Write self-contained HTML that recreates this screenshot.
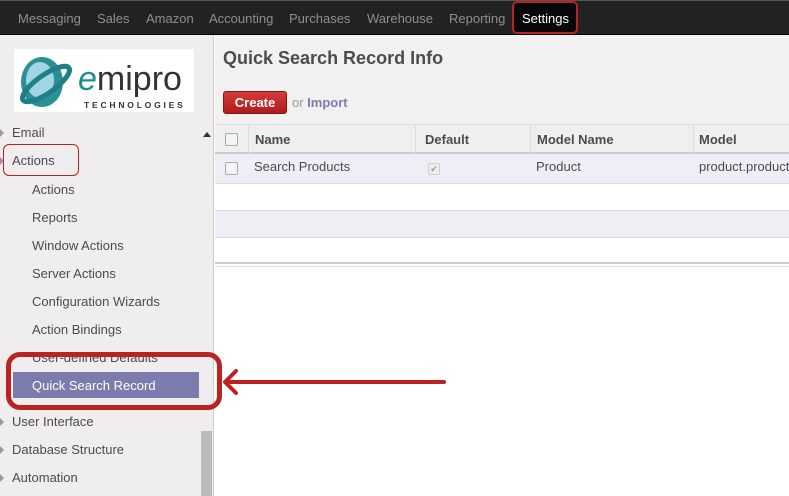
<!DOCTYPE html>
<html><head><meta charset="utf-8"><style>
*{margin:0;padding:0;box-sizing:border-box}
body{width:789px;height:496px;overflow:hidden;font-family:"Liberation Sans",Arial,sans-serif;background:#fff;position:relative;font-size:13px;color:#4c4c4c}
.top{position:absolute;left:0;top:0;width:789px;height:35px;background:#222;border-top:1px solid #555;border-bottom:1px solid #000}
.top span{position:absolute;top:10px;color:#8f8f8f;font-size:13px}
.set{position:absolute;left:512px;top:1px;width:66px;height:33px;background:#080808;border:2px solid #b22;border-radius:5px}
.side{position:absolute;left:0;top:35px;width:214px;height:461px;background:#efedee;border-right:1px solid #ccc}
.side .it{position:absolute;font-size:13px;color:#4c4c4c}
.tri{position:absolute;left:0;width:0;height:0;border-top:4px solid transparent;border-bottom:4px solid transparent;border-left:4px solid #999}
.hdr{position:absolute;left:215px;top:35px;width:574px;height:89px;background:#f2f1f2}
.hdr h1{position:absolute;left:8px;top:13px;font-size:18px;color:#4c4c4c;font-weight:bold}
.btn{position:absolute;left:8px;top:56px;width:64px;height:23px;background:linear-gradient(#d43b3b,#b01c1c);border:1px solid #8a1414;border-radius:3px;color:#fff;font-weight:bold;font-size:13px;text-align:center;line-height:21px}
.row{position:absolute;left:215px;width:574px;border-bottom:1px solid #ddd}
.cb{position:absolute;width:13px;height:13px;border:1px solid #aaa;border-radius:2px;background:#f4f4f4}
.th{position:absolute;top:7px;font-weight:bold;font-size:13px;color:#4c4c4c}
.col{position:absolute;top:0;width:1px;height:29px;background:#ddd}
</style></head><body>
<div class="top">
<span style="left:18px">Messaging</span><span style="left:97px">Sales</span><span style="left:146px">Amazon</span><span style="left:209px">Accounting</span><span style="left:289px">Purchases</span><span style="left:367px">Warehouse</span><span style="left:449px">Reporting</span>
</div>
<div class="set"><span style="position:absolute;left:8px;top:8px;color:#fff;font-size:13px">Settings</span></div>
<div class="side">
<div style="position:absolute;left:14px;top:14px;width:180px;height:63px;background:#fff"></div>
<svg style="position:absolute;left:14px;top:14px" width="180" height="63">
<ellipse cx="28" cy="33" rx="21" ry="25" fill="#2b8f96"/>
<ellipse cx="26" cy="31" rx="14" ry="18" fill="#9fd6e2"/>
<ellipse cx="32" cy="35" rx="28" ry="9" fill="none" stroke="#1f7e86" stroke-width="5" transform="rotate(-35 32 35)"/>
<text x="64" y="41" font-family="Liberation Sans" font-size="34" fill="#333"><tspan fill="#1f8d90" font-style="italic">e</tspan>mipro</text>
<text x="70" y="59" font-family="Liberation Sans" font-size="8.5" letter-spacing="2.8" fill="#333" font-weight="bold">TECHNOLOGIES</text>
</svg>
<div class="tri" style="top:94px"></div><div class="it" style="left:12px;top:90px">Email</div>
<div style="position:absolute;left:203px;top:97px;border-left:4px solid transparent;border-right:4px solid transparent;border-bottom:5px solid #333"></div>
<div class="tri" style="top:122px"></div><div class="it" style="left:12px;top:118px">Actions</div>
<div style="position:absolute;left:3px;top:109px;width:76px;height:32px;border:1.5px solid #b22;border-radius:6px"></div>
<div class="it" style="left:32px;top:147px">Actions</div>
<div class="it" style="left:32px;top:175px">Reports</div>
<div class="it" style="left:32px;top:203px">Window Actions</div>
<div class="it" style="left:32px;top:231px">Server Actions</div>
<div class="it" style="left:32px;top:259px">Configuration Wizards</div>
<div class="it" style="left:32px;top:287px">Action Bindings</div>
<div class="it" style="left:32px;top:315px">User-defined Defaults</div>
<div style="position:absolute;left:13px;top:337px;width:186px;height:26px;background:#7c7bad"></div>
<div class="it" style="left:32px;top:343px;color:#fff">Quick Search Record</div>
<div style="position:absolute;left:6px;top:317px;width:216px;height:58px;border:5px solid #b22;border-radius:14px"></div>
<div class="tri" style="top:383px"></div><div class="it" style="left:12px;top:379px">User Interface</div>
<div class="tri" style="top:411px"></div><div class="it" style="left:12px;top:407px">Database Structure</div>
<div class="tri" style="top:439px"></div><div class="it" style="left:12px;top:435px">Automation</div>
<div style="position:absolute;left:201px;top:396px;width:11px;height:65px;background:#bbb"></div>
</div>
<div class="hdr"><h1>Quick Search Record Info</h1><div class="btn">Create</div>
<span style="position:absolute;left:77px;top:60px;color:#999">or <b style="color:#7c7bad">Import</b></span></div>
<div class="row" style="top:124px;height:30px;background:#f0eff0;border-top:1px solid #ddd;border-bottom:2px solid #ccc">
<div class="cb" style="left:10px;top:8px"></div>
<div class="col" style="left:33px"></div><div class="th" style="left:40px">Name</div>
<div class="col" style="left:200px"></div><div class="th" style="left:210px">Default</div>
<div class="col" style="left:315px"></div><div class="th" style="left:322px">Model Name</div>
<div class="col" style="left:478px"></div><div class="th" style="left:484px">Model</div>
</div>
<div class="row" style="top:154px;height:30px;background:#eeeef7">
<div class="cb" style="left:10px;top:8px"></div>
<span style="position:absolute;left:39px;top:5px">Search Products</span>
<div class="cb" style="left:213px;top:9px;width:12px;height:12px;background:#eee;border-color:#ccc;font-size:9px;color:#999;line-height:10px;text-align:center">✔</div>
<span style="position:absolute;left:321px;top:5px">Product</span>
<span style="position:absolute;left:484px;top:5px">product.product</span>
</div>
<div class="row" style="top:184px;height:27px;background:#fff"></div>
<div class="row" style="top:211px;height:27px;background:#eeeef7"></div>
<div class="row" style="top:238px;height:26px;background:#fff;border-bottom:2px solid #ccc"></div>
<div style="position:absolute;left:215px;top:266px;width:574px;height:1px;background:#ddd"></div>
<svg style="position:absolute;left:220px;top:365px" width="230" height="35">
<path d="M6 17 L224 17" stroke="#b22" stroke-width="4" stroke-linecap="round"/>
<path d="M16 6 L5 17 L16 28" stroke="#b22" stroke-width="4" fill="none" stroke-linecap="round" stroke-linejoin="round"/>
</svg>
</body></html>
